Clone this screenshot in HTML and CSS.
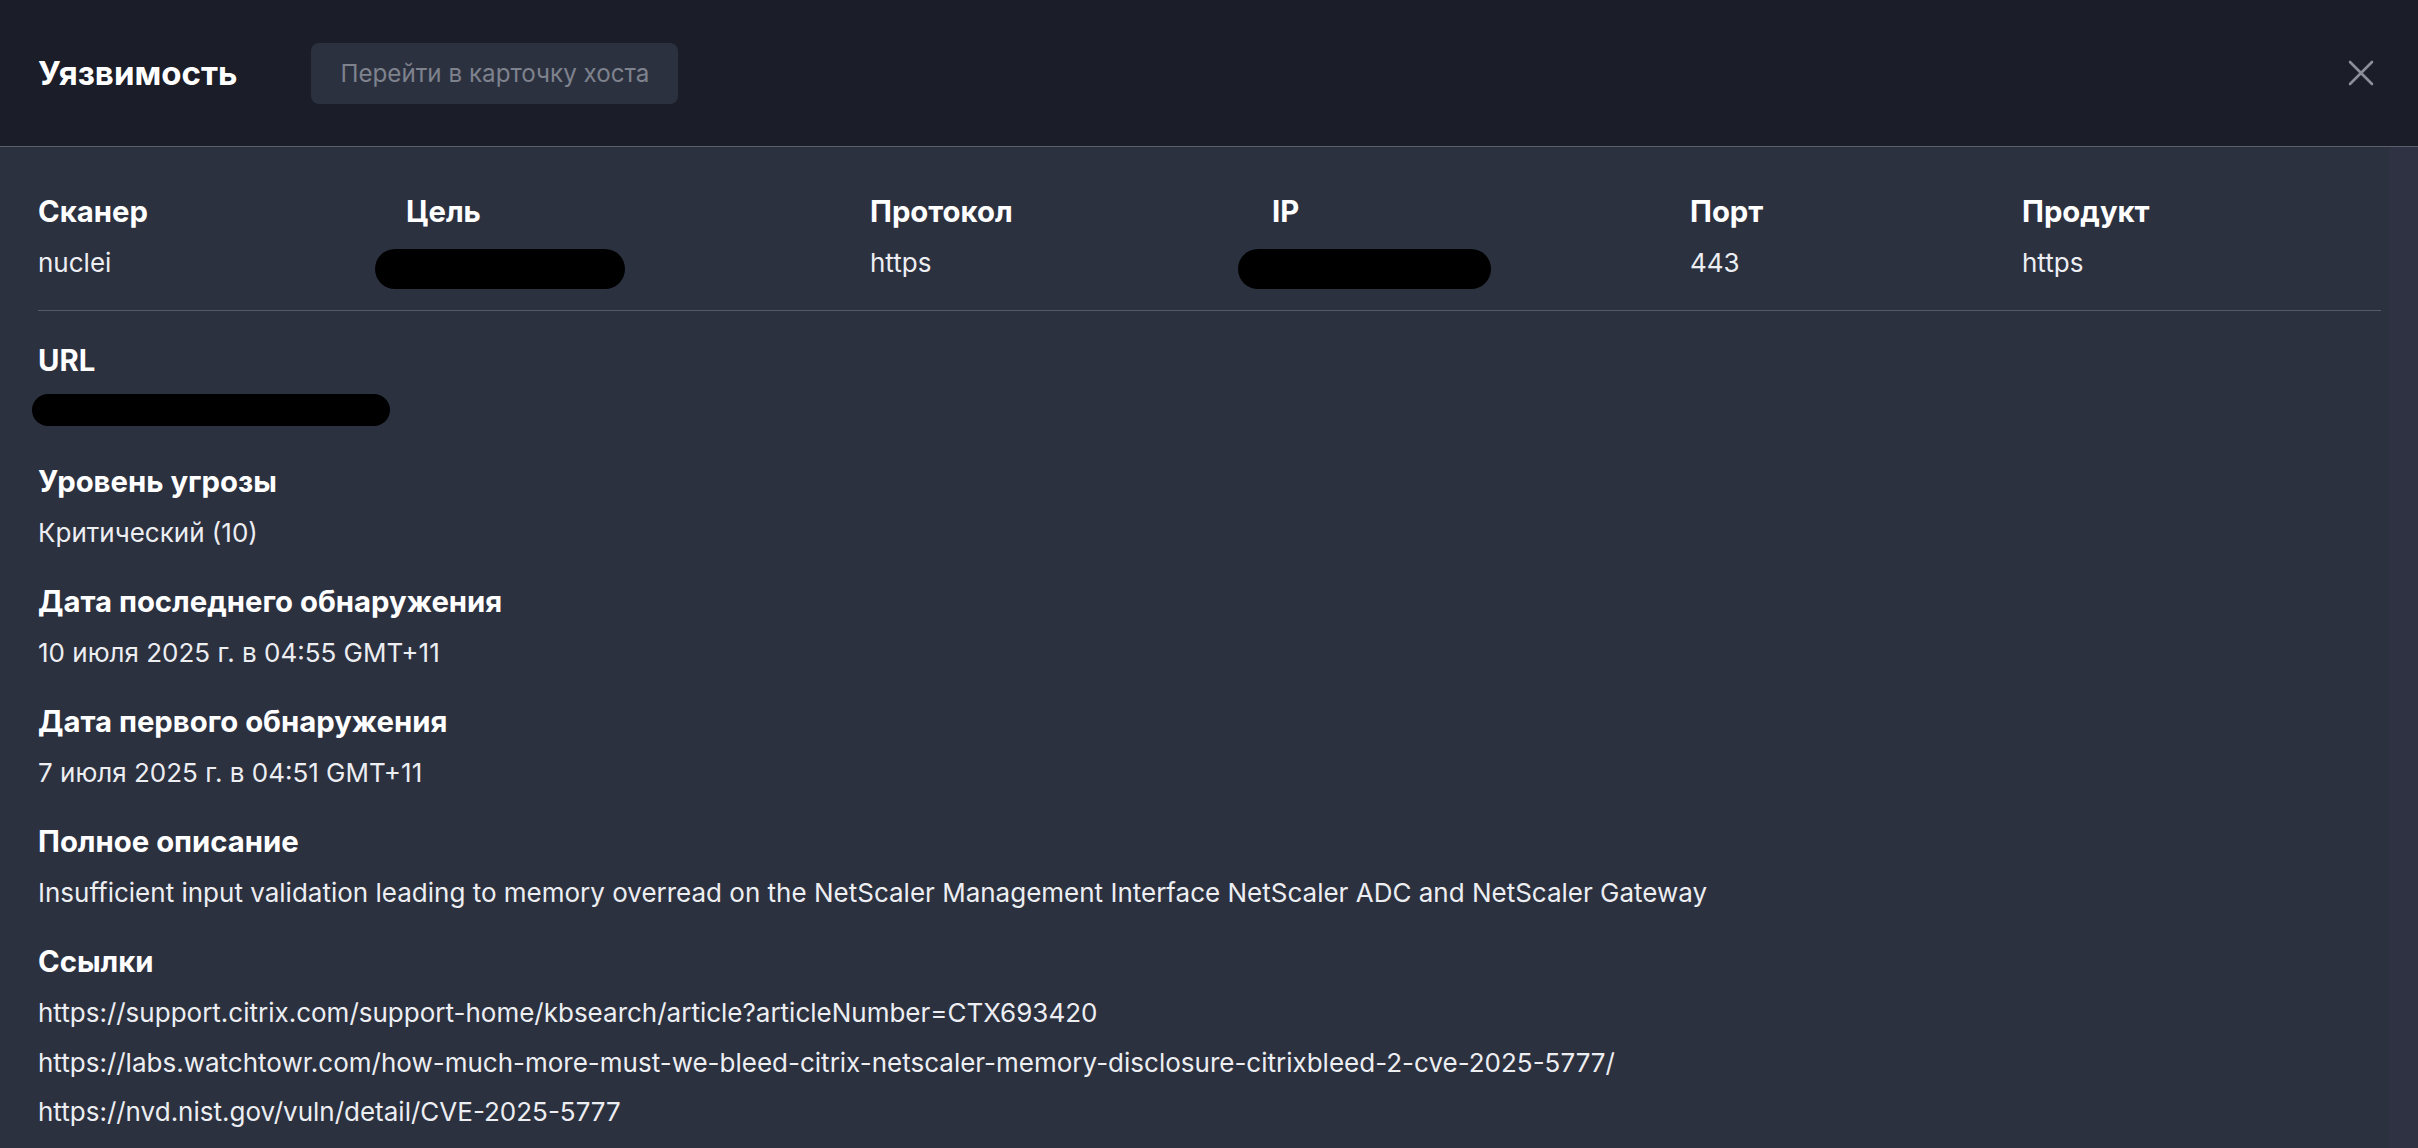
FILE: index.html
```html
<!DOCTYPE html>
<html lang="ru">
<head>
    <meta charset="UTF-8">
    <title>Уязвимость</title>
    <link rel="stylesheet" href="styles.css">
</head>
<body>

    <div class="modal">
        <div class="modal-header">
            <h1>Уязвимость</h1>
            <button class="host-btn">Перейти в карточку хоста</button>
            <button class="close-btn" title="Закрыть">
                <svg width="26" height="26" viewBox="0 0 26 26">
                    <path d="M2 2 L24 24 M24 2 L2 24" stroke="#8b8f99" stroke-width="2.6" stroke-linecap="round" fill="none"/>
                </svg>
            </button>
        </div>

        <div class="modal-body">
            <div class="content">
                <div class="summary">
                    <div class="field">
                        <div class="label">Сканер</div>
                        <div class="value">nuclei</div>
                    </div>
                    <div class="field">
                        <div class="label">Цель</div>
                        <div class="hidden-value target"></div>
                    </div>
                    <div class="field">
                        <div class="label">Протокол</div>
                        <div class="value">https</div>
                    </div>
                    <div class="field">
                        <div class="label">IP</div>
                        <div class="hidden-value ip"></div>
                    </div>
                    <div class="field">
                        <div class="label">Порт</div>
                        <div class="value">443</div>
                    </div>
                    <div class="field">
                        <div class="label">Продукт</div>
                        <div class="value">https</div>
                    </div>
                </div>

                <div class="section url-section">
                    <div class="label">URL</div>
                    <div class="hidden-value url"></div>
                </div>

                <div class="section">
                    <div class="label">Уровень угрозы</div>
                    <div class="value">Критический (10)</div>
                </div>

                <div class="section">
                    <div class="label">Дата последнего обнаружения</div>
                    <div class="value">10 июля 2025 г. в 04:55 GMT+11</div>
                </div>

                <div class="section">
                    <div class="label">Дата первого обнаружения</div>
                    <div class="value">7 июля 2025 г. в 04:51 GMT+11</div>
                </div>

                <div class="section">
                    <div class="label">Полное описание</div>
                    <div class="value">Insufficient input validation leading to memory overread on the NetScaler Management Interface NetScaler ADC and NetScaler Gateway</div>
                </div>

                <div class="section">
                    <div class="label">Ссылки</div>
                    <div class="links">
                        <a href="#">https://support.citrix.com/support-home/kbsearch/article?articleNumber=CTX693420</a>
                        <a href="#">https://labs.watchtowr.com/how-much-more-must-we-bleed-citrix-netscaler-memory-disclosure-citrixbleed-2-cve-2025-5777/</a>
                        <a href="#">https://nvd.nist.gov/vuln/detail/CVE-2025-5777</a>
                    </div>
                </div>
            </div>
            <div class="scroll-track"></div>
        </div>
    </div>

</body>
</html>
```

FILE: styles.css
```css
html, body {
    height: 100%;
}

body {
    margin: 0;
    font-family: Inter, "Noto Sans", sans-serif;
    background-color: #2c3140;
    color: #eceef2;
    overflow: hidden;
}

.modal {
    display: flex;
    flex-direction: column;
    height: 100%;
}

.modal-header {
    display: flex;
    align-items: center;
    height: 147px;
    padding: 0 44px 0 38px;
    background-color: #1b1d28;
    border-bottom: 1px solid #5a5f6c;
    box-sizing: border-box;
}

.modal-header h1 {
    margin: 0;
    font-size: 33px;
    font-weight: 700;
    color: #ffffff;
}

.host-btn {
    margin-left: 74px;
    height: 61px;
    padding: 0 29px;
    background-color: #2c3140;
    color: #7e828d;
    border: none;
    border-radius: 8px;
    font-family: inherit;
    font-size: 24.2px;
    cursor: pointer;
}

.close-btn {
    margin-left: auto;
    padding: 0;
    width: 26px;
    height: 26px;
    background: none;
    border: none;
    cursor: pointer;
}

.close-btn svg {
    display: block;
}

.modal-body {
    flex: 1;
    display: flex;
    min-height: 0;
}

.content {
    flex: 1;
    padding: 47px 8px 0 38px;
}

.scroll-track {
    width: 29px;
    background-color: #2e3242;
}

.summary {
    display: grid;
    grid-template-columns: 368px 464px 402px 418px 332px 1fr;
    padding-bottom: 29px;
    border-bottom: 1px solid #565b68;
    margin-bottom: 32px;
}

.label {
    font-size: 29.3px;
    line-height: 36px;
    font-weight: 700;
    color: #ffffff;
}

.value {
    margin-top: 15px;
    font-size: 26px;
    line-height: 36px;
    color: #eceef2;
}

.section {
    margin-bottom: 33px;
}

.url-section {
    margin-bottom: 38px;
}

.hidden-value {
    background-color: #000000;
}

.hidden-value.target {
    width: 250px;
    height: 40px;
    margin: 19px 0 -8px -31px;
    border-radius: 20px;
}

.hidden-value.ip {
    width: 253px;
    height: 40px;
    margin: 19px 0 -8px -34px;
    border-radius: 20px;
}

.hidden-value.url {
    width: 358px;
    height: 32px;
    margin: 15px 0 4px -6px;
    border-radius: 16px;
}

.links {
    display: flex;
    flex-direction: column;
    gap: 13.5px;
    margin-top: 15px;
}

.links a {
    font-size: 26px;
    line-height: 36px;
    color: #eceef2;
    text-decoration: none;
}

.links a:hover {
    text-decoration: underline;
}
```
